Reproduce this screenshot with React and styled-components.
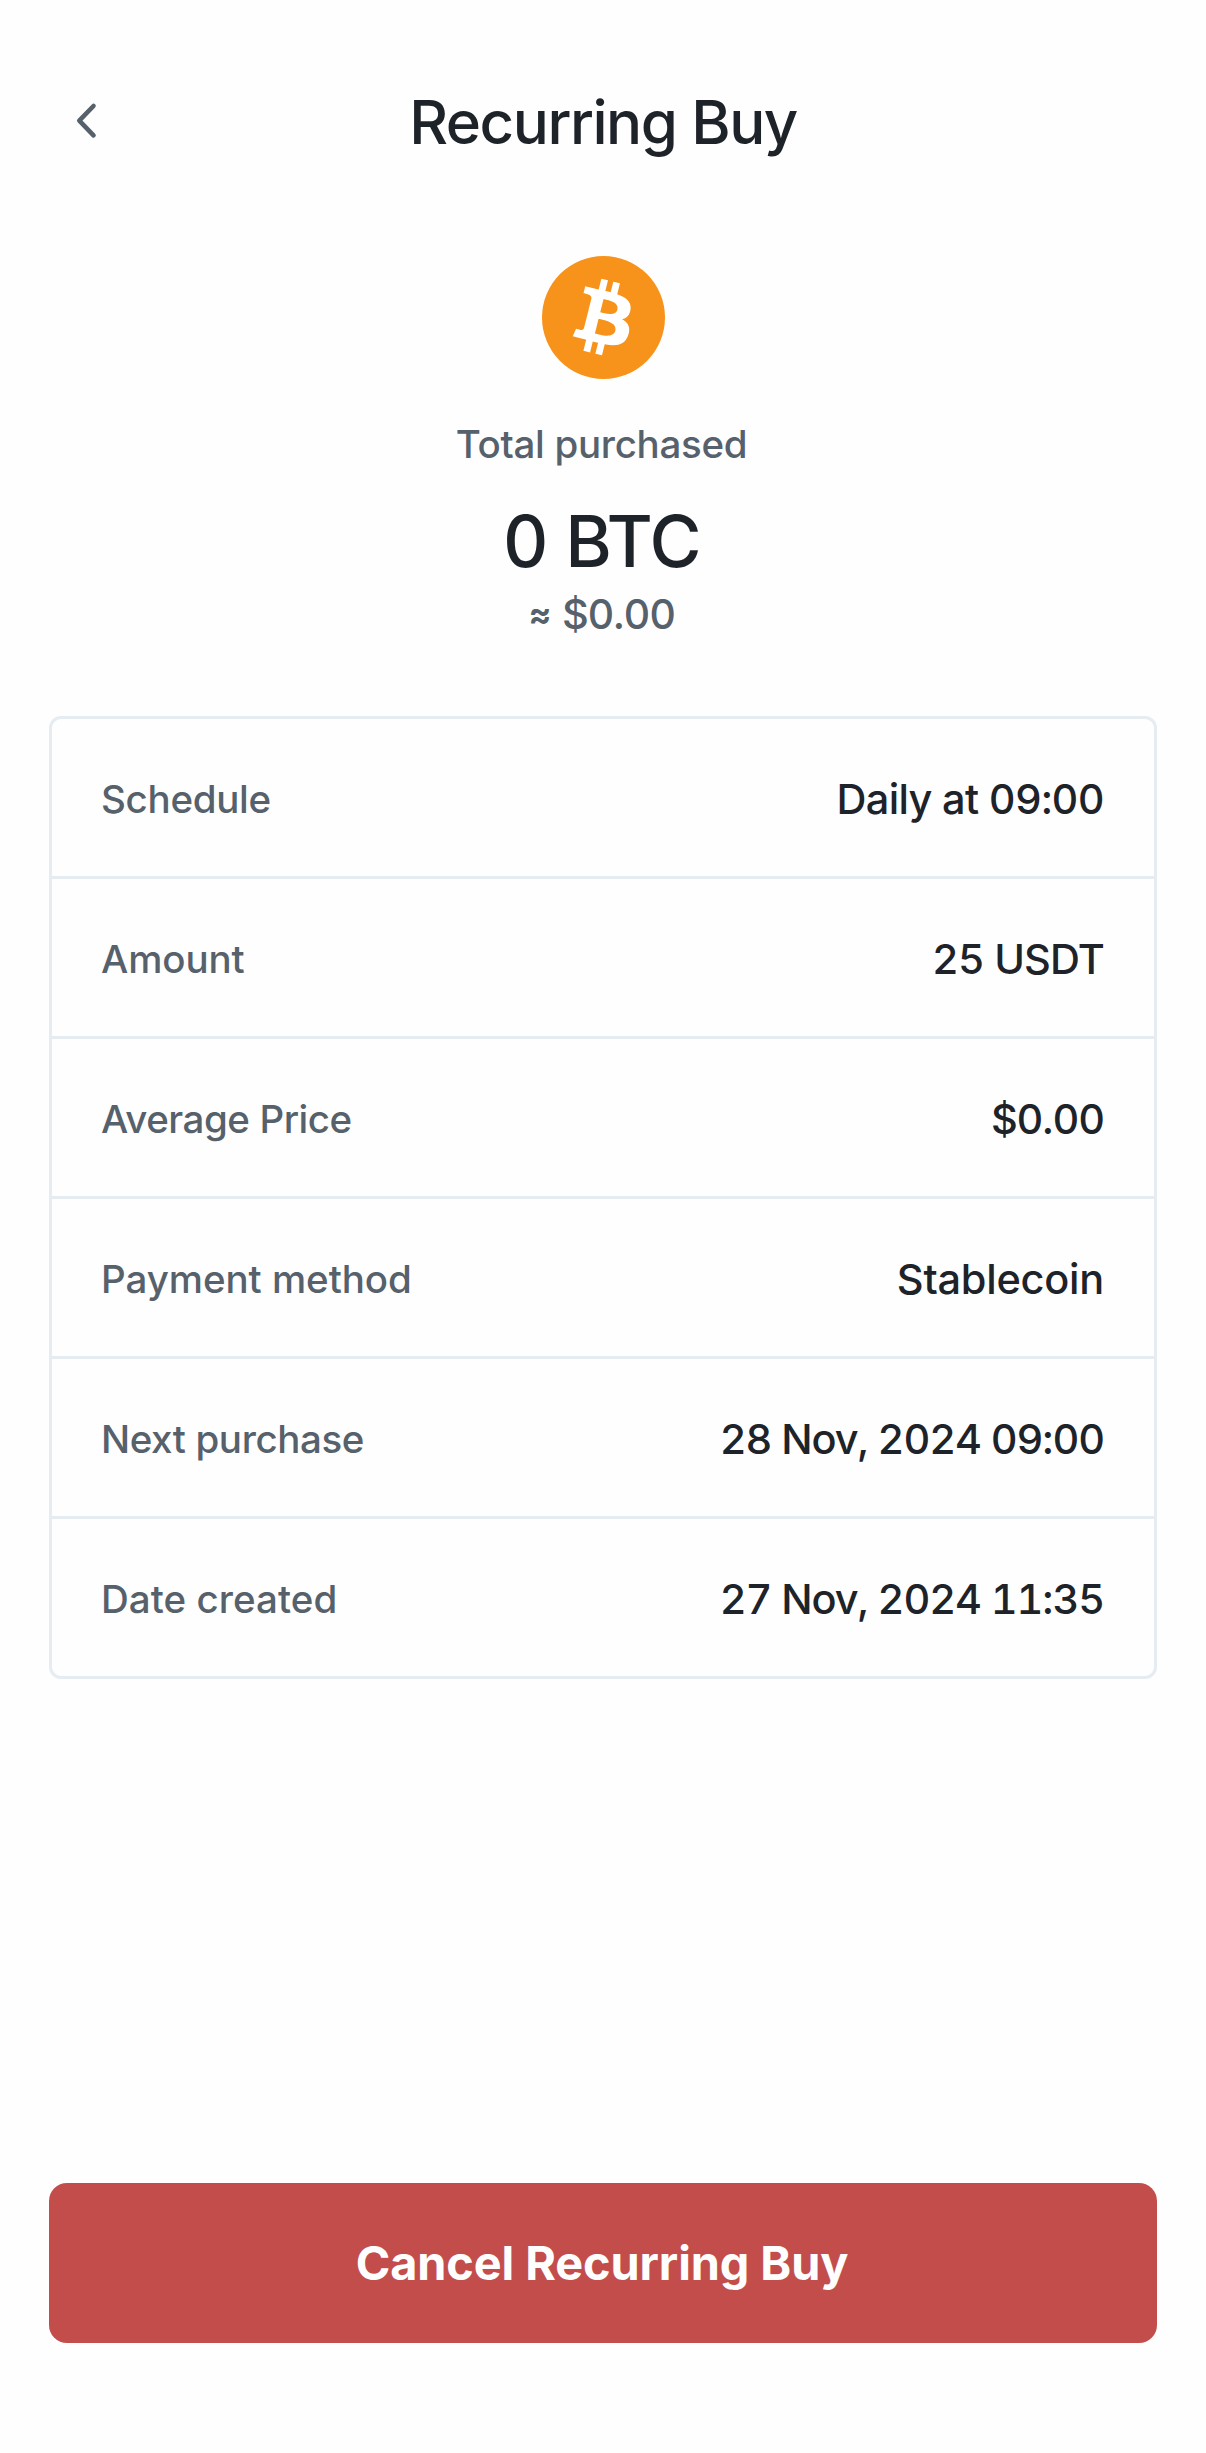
import React from 'react';
import styled, { createGlobalStyle } from 'styled-components';

const GlobalStyle = createGlobalStyle`
  * {
    box-sizing: border-box;
  }

  body {
    margin: 0;
    background-color: #fefefe;
    font-family: Inter, 'Liberation Sans', sans-serif;
    font-variant-numeric: tabular-nums;
  }
`;

const Page = styled.main`
  display: flex;
  flex-direction: column;
  height: 2453px;
  padding: 71px 49px 110px;
  color: #1e2329;
`;

const Header = styled.header`
  display: grid;
  grid-template-columns: 80px 1fr 80px;
  align-items: center;
  height: 101px;
`;

const BackButton = styled.button`
  display: flex;
  padding: 0 0 1px 22px;
  border: none;
  background: none;
  color: #56616b;
  cursor: pointer;
`;

const Title = styled.h1`
  margin: 0;
  font-size: 60px;
  font-weight: 500;
  line-height: 72px;
  letter-spacing: -1.44px;
  text-align: center;
  white-space: nowrap;
`;

const Summary = styled.section`
  display: flex;
  flex-direction: column;
  align-items: center;
  height: 544px;
  padding-top: 84px;
`;

const SummaryLabel = styled.div`
  margin-top: 41px;
  padding-right: 3px;
  color: #56616b;
  font-size: 38.5px;
  font-weight: 500;
  line-height: 48px;
  letter-spacing: -0.3px;
`;

const Total = styled.div`
  margin-top: 31px;
  padding-right: 3px;
  font-size: 71px;
  font-weight: 500;
  line-height: 84px;
  letter-spacing: -1.3px;
`;

const Fiat = styled.div`
  display: flex;
  align-items: center;
  gap: 12px;
  margin-top: 5px;
  padding-right: 2px;
  color: #56616b;
  font-size: 41.5px;
  font-weight: 500;
  line-height: 52px;
  letter-spacing: -1.1px;
`;

const Approx = styled.span`
  font-size: 34px;
  font-weight: 700;
`;

const Details = styled.dl`
  margin: 0;
  border: 3px solid #e5ecf2;
  border-radius: 12px;
`;

const Row = styled.div`
  display: flex;
  align-items: center;
  justify-content: space-between;
  height: 160px;
  padding: 3px 50px 0 49px;
  border-bottom: 3px solid #e5ecf2;

  &:last-child {
    height: 157px;
    border-bottom: none;
  }
`;

const Label = styled.dt`
  color: #56616b;
  font-size: 38.5px;
  font-weight: 500;
  letter-spacing: ${(props) => props.$spacing}px;
`;

const Value = styled.dd`
  margin: 0;
  font-size: 41.5px;
  font-weight: 500;
  letter-spacing: ${(props) => props.$spacing}px;
`;

const CancelButton = styled.button`
  height: 160px;
  margin-top: auto;
  padding: 0 2px 0 0;
  border: none;
  border-radius: 18px;
  background-color: #c34d4b;
  color: #fefefe;
  font-family: inherit;
  font-size: 46.8px;
  font-weight: 700;
  letter-spacing: -0.09px;
  cursor: pointer;
`;

const rows = [
  { label: 'Schedule', labelSpacing: -0.29, value: 'Daily at 09:00', valueSpacing: -0.7 },
  { label: 'Amount', labelSpacing: -0.1, value: '25 USDT', valueSpacing: -0.9 },
  { label: 'Average Price', labelSpacing: -0.46, value: '$0.00', valueSpacing: -1.1 },
  { label: 'Payment method', labelSpacing: -0.05, value: 'Stablecoin', valueSpacing: -0.25 },
  { label: 'Next purchase', labelSpacing: -0.4, value: '28 Nov, 2024 09:00', valueSpacing: -1.1 },
  { label: 'Date created', labelSpacing: 0.05, value: '27 Nov, 2024 11:35', valueSpacing: -1.1 },
];

const BackIcon = () => (
  <svg width="36" height="44" viewBox="0 0 36 44" fill="none">
    <path
      d="M22.5 7 8.3 21.7 22.5 36.4"
      stroke="currentColor"
      strokeWidth="4.6"
      strokeLinecap="round"
      strokeLinejoin="round"
    />
  </svg>
);

const BitcoinIcon = () => (
  <svg width="123" height="123" viewBox="0 0 32 32">
    <circle cx="16" cy="16" r="16" fill="#f7931a" />
    <path
      fill="#fff"
      fillRule="evenodd"
      transform="translate(-0.15 -0.1)"
      d="M23.189 14.02c.314-2.096-1.283-3.223-3.465-3.975l.708-2.84-1.728-.43-.69 2.765c-.454-.114-.92-.22-1.385-.326l.695-2.783L15.596 6l-.708 2.839c-.376-.086-.746-.17-1.104-.26l.002-.009-2.384-.595-.46 1.846s1.283.294 1.256.312c.7.175.826.638.805 1.006l-.806 3.235c.048.012.11.03.18.057l-.183-.045-1.13 4.532c-.086.212-.303.531-.793.41.018.025-1.256-.313-1.256-.313l-.858 1.978 2.25.561c.418.105.828.215 1.231.318l-.715 2.872 1.727.43.708-2.84c.472.127.93.245 1.378.357l-.706 2.828 1.728.43.715-2.866c2.948.558 5.164.333 6.097-2.333.752-2.146-.037-3.385-1.588-4.192 1.13-.26 1.98-1.003 2.207-2.538zm-3.95 5.538c-.533 2.147-4.148.986-5.32.695l.95-3.805c1.172.293 4.929.872 4.37 3.11zm.535-5.569c-.487 1.953-3.495.96-4.47.717l.86-3.45c.975.243 4.118.696 3.61 2.733z"
    />
  </svg>
);

const App = () => {
  return (
    <>
      <GlobalStyle />
      <Page>
        <Header>
          <BackButton aria-label="Back">
            <BackIcon />
          </BackButton>
          <Title>Recurring Buy</Title>
        </Header>
        <Summary>
          <BitcoinIcon />
          <SummaryLabel>Total purchased</SummaryLabel>
          <Total>0 BTC</Total>
          <Fiat>
            <Approx>≈</Approx>
            <span>$0.00</span>
          </Fiat>
        </Summary>
        <Details>
          {rows.map((row) => (
            <Row key={row.label}>
              <Label $spacing={row.labelSpacing}>{row.label}</Label>
              <Value $spacing={row.valueSpacing}>{row.value}</Value>
            </Row>
          ))}
        </Details>
        <CancelButton>Cancel Recurring Buy</CancelButton>
      </Page>
    </>
  );
};

export default App;
